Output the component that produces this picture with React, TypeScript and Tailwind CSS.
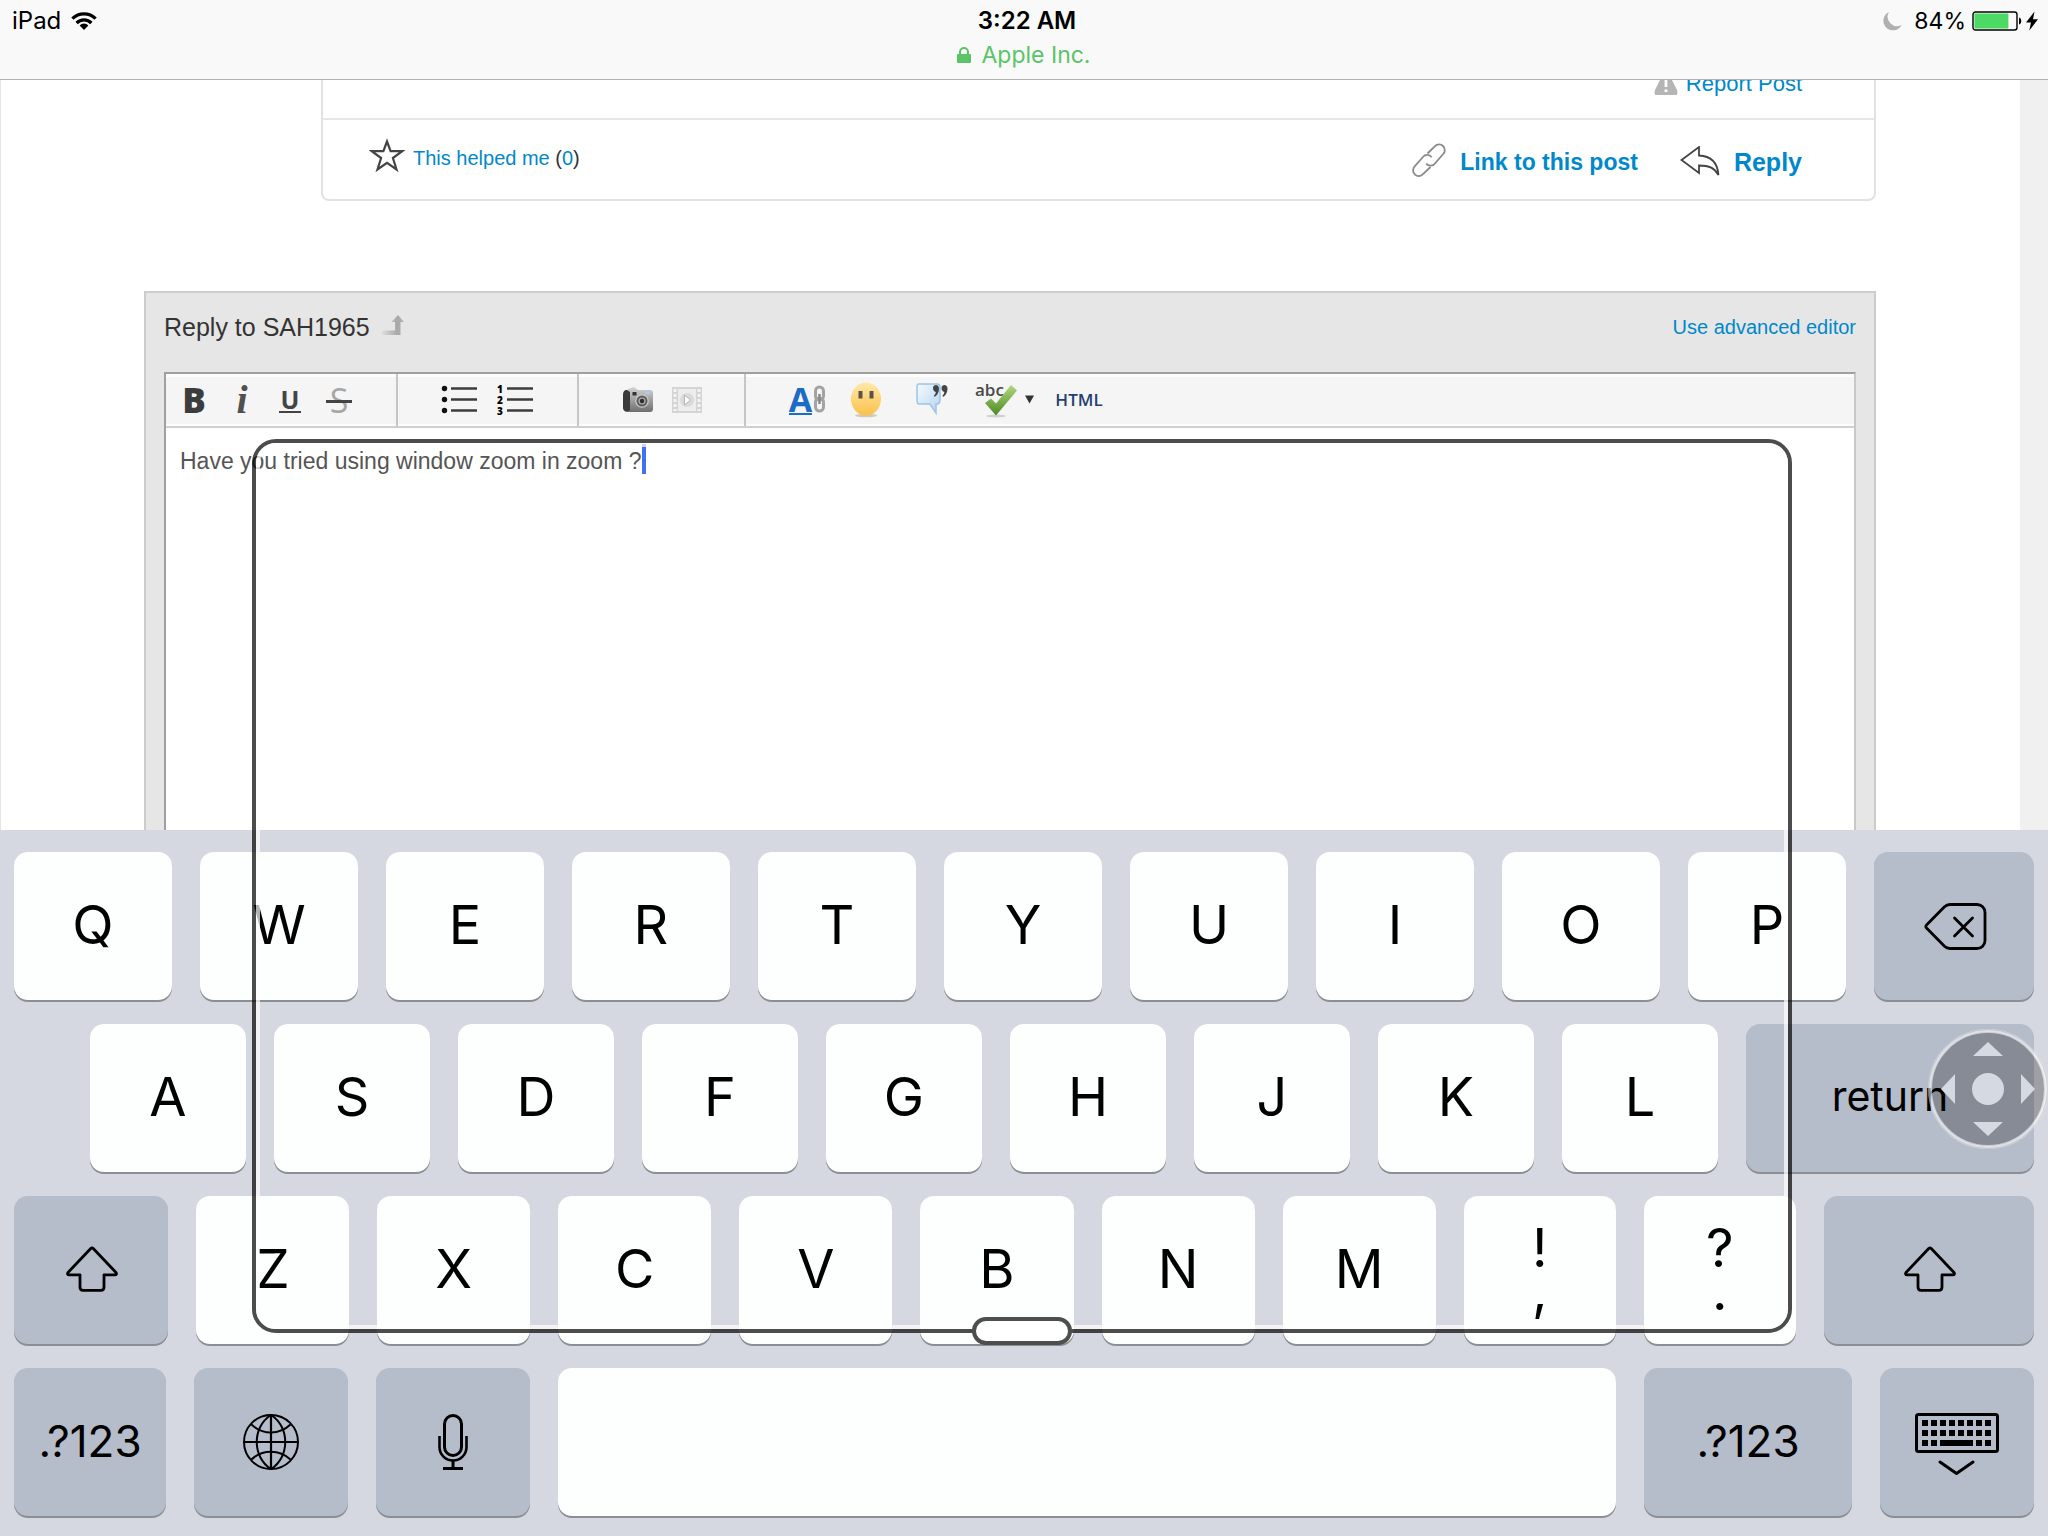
import React from "react";

type KeyDef = {
  id: string;
  label?: React.ReactNode;
  name?: string;
  dark?: boolean;
  grow: string;
  text?: string;
};

/* ---------- status bar icons ---------- */

function WifiIcon() {
  return (
    <svg width="26" height="18" viewBox="0 0 26 18" fill="none" stroke="#000" strokeWidth="3.2">
      <path d="M1.4 6.6a16.4 16.4 0 0 1 23.2 0" />
      <path d="M5.6 11a10.5 10.5 0 0 1 14.8 0" />
      <path d="M13 18l-4.4-4.6a6.2 6.2 0 0 1 8.8 0z" fill="#000" stroke="none" />
    </svg>
  );
}

function LockIcon() {
  return (
    <svg width="14" height="16" viewBox="0 0 14 16">
      <path d="M3 8V5a4 4 0 0 1 8 0v3" fill="none" stroke="#5ac467" strokeWidth="2" />
      <rect x="0" y="7" width="14" height="9" rx="1" fill="#5ac467" />
    </svg>
  );
}

function MoonIcon() {
  return (
    <svg width="19" height="19" viewBox="0 0 19 19">
      <path d="M6 0A9.6 9.6 0 1 0 18.6 13 9.4 9.4 0 0 1 6 0z" fill="#b0b0b0" />
    </svg>
  );
}

function BatteryIcon() {
  return (
    <svg width="50" height="20" viewBox="0 0 50 20">
      <rect x="1" y="1" width="44" height="18" rx="2.5" fill="none" stroke="#000" strokeWidth="1.4" />
      <rect x="2.4" y="2.4" width="34" height="15.2" rx="1" fill="#4cd964" />
      <path d="M47 6.5c3 .8 3 6.2 0 7z" fill="#000" />
    </svg>
  );
}

function BoltIcon() {
  return (
    <svg width="12" height="20" viewBox="0 0 12 20">
      <path d="M8.5.5L0 11.5h5L3.3 19.5 12 8.3H7z" fill="#000" />
    </svg>
  );
}

/* ---------- page icons ---------- */

function WarnIcon() {
  return (
    <svg width="24" height="22" viewBox="0 0 24 22">
      <path d="M12 0c2 0 3 1 4 3l7 14c1 3 .5 5-1.5 5h-19C.5 22 0 20 1 17L8 3c1-2 2-3 4-3z" fill="#b5b5b5" />
      <path d="M10.6 7h2.8v7h-2.8zM10.6 16.5h2.8v2.5h-2.8z" fill="#fff" />
    </svg>
  );
}

function StarIcon() {
  return (
    <svg width="36" height="40" viewBox="0 0 36 40">
      <path
        d="M18 3.5l3.6 9.7h11.6l-9.3 6.8 3.6 11.5L18 24.8 8.5 31.5l3.6-11.5L2.8 13.2h11.6z"
        fill="none"
        stroke="#444"
        strokeWidth="2.2"
      />
    </svg>
  );
}

function ChainIcon() {
  return (
    <svg width="34" height="38" viewBox="0 0 34 38" fill="none" stroke="#8a8a8a" strokeWidth="1.8">
      <path d="M15.5 10.5L23 3.2a5.6 5.6 0 0 1 8.2 7.8l-8 9.2a5.6 5.6 0 0 1-9 .4" />
      <path d="M18.5 24L11 31.2a5.6 5.6 0 0 1-8.5-7.6l8.4-9.600a5.6 5.6 0 0 1 8.8.2" />
    </svg>
  );
}

function ReplyArrowIcon() {
  return (
    <svg width="40" height="32" viewBox="0 0 40 32">
      <path
        d="M19 1v8.5c11 .5 18.500 6 19.500 19.500-4-7-9-9.500-19.500-9.500V27L1.500 14z"
        fill="none"
        stroke="#444"
        strokeWidth="1.8"
      />
    </svg>
  );
}

function UpArrowIcon() {
  return (
    <svg width="22" height="24" viewBox="0 0 22 24">
      <defs>
        <linearGradient id="upArrow" x1="0" x2="1">
          <stop offset="0" stopColor="#dedede" />
          <stop offset="0.7" stopColor="#a8a8a8" />
          <stop offset="1" stopColor="#b4b4b4" />
        </linearGradient>
      </defs>
      <path d="M0 20v-4.5h13V7H9.500L16 0l6 7h-3.500v13z" fill="url(#upArrow)" />
    </svg>
  );
}

/* ---------- toolbar icons ---------- */

function BulletListIcon() {
  return (
    <svg width="36" height="30" viewBox="0 0 36 30" fill="#111">
      <circle cx="3.500" cy="3.500" r="2.700" />
      <circle cx="3.500" cy="14.500" r="2.700" />
      <circle cx="3.500" cy="25.500" r="2.700" />
      <path d="M10 3.500h26M10 14.500h26M10 25.500h26" stroke="#3c3c3c" strokeWidth="2.400" />
    </svg>
  );
}

function NumberListIcon() {
  return (
    <span className="flex items-center gap-1">
      <span className="flex flex-col font-['Open_Sans',sans-serif] text-[10px] leading-[11px] font-extrabold text-black">
        <span>1</span>
        <span>2</span>
        <span>3</span>
      </span>
      <svg width="26" height="30" viewBox="0 0 26 30">
        <path d="M0 3.500h26M0 14.500h26M0 25.500h26" stroke="#3c3c3c" strokeWidth="2.400" />
      </svg>
    </span>
  );
}

function CameraIcon() {
  return (
    <svg width="30" height="26" viewBox="0 0 30 26">
      <defs>
        <linearGradient id="camBody" x1="0" x2="0" y1="0" y2="1">
          <stop offset="0" stopColor="#d4d4d4" />
          <stop offset="1" stopColor="#6f6f6f" />
        </linearGradient>
      </defs>
      <path d="M5 2l6-2 4 3h12c2 0 3 1 3 2.500V22c0 2-1 3-3 3H4c-2 0-3-1-3-3V8z" fill="url(#camBody)" />
      <path d="M0 8c0-3 1-5 4-5l3 2v18c-2 2-7 2-7-2z" fill="#3a3a3a" />
      <path d="M9.500 5h4v3.500h-4z" fill="#333" />
      <path d="M22 5h5v2.500h-5z" fill="#a9cdea" />
      <circle cx="19" cy="14" r="6.800" fill="#c9c9c9" />
      <circle cx="19" cy="14" r="5.500" fill="#5a5a5a" />
      <circle cx="19" cy="14" r="3.600" fill="#a8a8a8" />
      <circle cx="19" cy="14" r="2.200" fill="#2c2c2c" />
    </svg>
  );
}

function VideoIcon() {
  return (
    <svg width="30" height="26" viewBox="0 0 30 26">
      <rect x="0" y="0" width="30" height="26" fill="#d4d4d4" />
      <rect x="6" y="2" width="18" height="22" fill="#ececec" />
      <path d="M3 2v22M27 2v22" stroke="#f4f4f4" strokeWidth="3" strokeDasharray="3 2" />
      <circle cx="15" cy="13" r="7" fill="#dadada" />
      <path d="M12.500 8l6 5-6 5z" fill="#fff" stroke="#b5b5b5" />
    </svg>
  );
}

function LinkTextIcon() {
  return (
    <span className="flex items-center">
      <span className="border-b-2 border-[#1b6cc4] font-['Open_Sans',sans-serif] text-[34px] leading-[28px] font-bold text-[#1b6cc4]">
        A
      </span>
      <svg width="15" height="32" viewBox="0 0 15 32" fill="none" stroke="#a3a3a3" strokeWidth="3">
        <rect x="3.500" y="3" width="8" height="13" rx="4" />
        <rect x="3.500" y="14" width="8" height="13" rx="4" />
        <path d="M7.500 10v10" stroke="#8b8b8b" strokeWidth="2.500" />
      </svg>
    </span>
  );
}

function FaceIcon() {
  return (
    <svg width="32" height="36" viewBox="0 0 32 36">
      <defs>
        <linearGradient id="face" x1="0" x2="0" y1="0" y2="1">
          <stop offset="0" stopColor="#ffe9a8" />
          <stop offset="1" stopColor="#fbc14a" />
        </linearGradient>
      </defs>
      <ellipse cx="16" cy="33.500" rx="11" ry="1.800" fill="#cfcabb" />
      <ellipse cx="16" cy="17" rx="15" ry="16.500" fill="url(#face)" />
      <path d="M10.500 9v7.500M21.500 9v7.500" stroke="#5b5348" strokeWidth="4" />
    </svg>
  );
}

function QuoteIcon() {
  return (
    <svg width="32" height="34" viewBox="0 0 32 34">
      <defs>
        <linearGradient id="bubble" x1="0" x2="1" y1="0" y2="1">
          <stop offset="0" stopColor="#f4faff" />
          <stop offset="1" stopColor="#b4d5f0" />
        </linearGradient>
      </defs>
      <path
        d="M3 1h18c2 0 3 1 3 3v13c0 2-1 4-3 4h-1v9l-6-9H3c-2 0-2-2-2-4V4c0-2 0-3 2-3z"
        fill="url(#bubble)"
        stroke="#9cc4e6"
        strokeWidth="1.500"
      />
      <path
        d="M17 5c0-2 1.500-3 3-3s3 1.300 3 3.500c0 3.800-1.600 7-4.500 8.500l-.5-1.500c1.200-1 1.800-2.200 1.800-3.500C18 8.500 17 7 17 5zM25.500 5c0-2 1.500-3 3-3s3 1.300 3 3.500c0 3.800-1.600 7-4.500 8.500l-.5-1.500c1.200-1 1.800-2.200 1.800-3.500-1.800-.5-2.800-2-2.800-4z"
        fill="#444"
      />
    </svg>
  );
}

function SpellIcon() {
  return (
    <span className="relative flex h-9 w-[60px] items-center">
      <span className="absolute -top-0.5 left-0 font-['Open_Sans',sans-serif] text-[17px] leading-5 font-semibold text-[#4a4a4a]">
        abc
      </span>
      <svg width="60" height="36" viewBox="0 0 60 36" className="relative">
        <defs>
          <linearGradient id="check" x1="0" x2="0" y1="0" y2="1">
            <stop offset="0" stopColor="#b4d77e" />
            <stop offset="1" stopColor="#4c8a22" />
          </linearGradient>
        </defs>
        <ellipse cx="21" cy="34" rx="10" ry="1.500" fill="#d0d0d0" />
        <path d="M10 21l6-4.500 5 5L36 3l6 5.500L21 33.500z" fill="url(#check)" />
        <path d="M50 13.500h9l-4.500 8z" fill="#333" />
      </svg>
    </span>
  );
}

/* ---------- keyboard icons ---------- */

function BackspaceIcon() {
  return (
    <svg width="66" height="47" viewBox="-3 0 66 47" fill="none" stroke="#000" strokeWidth="2.800" strokeLinecap="round">
      <path
        d="M26 1.500h27a8 8 0 0 1 8 8v28a8 8 0 0 1-8 8H26c-2.500 0-4-.8-5.500-2.200L2.500 25a2 2 0 0 1 0-3l18-18.300C22 2.300 23.500 1.500 26 1.500z"
        strokeLinejoin="round"
      />
      <path d="M30.500 15l18 18M48.500 15l-18 18" />
    </svg>
  );
}

function ShiftIcon() {
  return (
    <svg width="54" height="48" viewBox="-2 0 54 48" fill="none" stroke="#000" strokeWidth="2.800" strokeLinejoin="round">
      <path d="M25 2.300L2 26.500c-.9 1.200-.4 2.300 1 2.300h11V41c0 2 1 3.300 3 3.300h18c2 0 3-1.300 3-3.300V28.800h11c1.400 0 1.900-1.100 1-2.300L27 2.300c-.6-.7-1.400-.7-2 0z" />
    </svg>
  );
}

function GlobeIcon() {
  return (
    <svg width="56" height="56" viewBox="0 0 56 56" fill="none" stroke="#000" strokeWidth="2">
      <circle cx="28" cy="28" r="27" />
      <path d="M28 1v54M1 28h54" strokeWidth="2.200" />
      <path d="M28 1C9 13 9 43 28 55M28 1c19 12 19 42 0 54" />
      <path d="M8.500 10.500c11 10.500 28 10.500 39 0M8.500 45.500c11-10.500 28-10.500 39 0" />
    </svg>
  );
}

function MicIcon() {
  return (
    <svg width="30" height="56" viewBox="0 0 30 56" fill="none" stroke="#000" strokeWidth="3">
      <rect x="6.500" y="1.500" width="17" height="40" rx="8.500" />
      <path d="M1.500 22v11a13.500 13.500 0 0 0 27 0V22" strokeWidth="2.600" />
      <path d="M15 46v9M5 54.500h20" />
    </svg>
  );
}

function HideKeyboardIcon() {
  const cols = [0, 1, 2, 3, 4, 5, 6, 7];
  return (
    <svg width="84" height="66" viewBox="0 -4 84 66">
      <rect x="1.500" y="1.500" width="81" height="37" rx="2" fill="none" stroke="#000" strokeWidth="3" />
      {cols.map((c) => (
        <g key={c}>
          <rect x={7 + c * 9} y="7" width="6" height="6" />
          <rect x={7 + c * 9} y="17" width="6" height="6" />
        </g>
      ))}
      <rect x="7" y="27" width="6" height="6" />
      <rect x="16" y="27" width="6" height="6" />
      <rect x="25" y="27" width="33" height="6" />
      <rect x="61" y="27" width="6" height="6" />
      <rect x="70" y="27" width="6" height="6" />
      <path d="M25 49l16.500 11.500L58 49" fill="none" stroke="#000" strokeWidth="3" strokeLinecap="round" />
    </svg>
  );
}

function JoystickIcon() {
  return (
    <svg width="120" height="120" viewBox="0 0 120 120">
      <circle cx="60" cy="60" r="57" fill="#000" fillOpacity="0.260" />
      <circle cx="60" cy="60" r="58" fill="none" stroke="#fff" strokeOpacity="0.550" strokeWidth="4" />
      <circle cx="60" cy="60" r="59.500" fill="none" stroke="#000" strokeOpacity="0.120" />
      <g fill="#d5dae2">
        <circle cx="60" cy="60" r="16" />
        <path d="M60 13l15 14H45zM60 107l15-14H45zM13 60l14-15v30zM107 60L93 45v30z" />
      </g>
    </svg>
  );
}

/* ---------- keyboard ---------- */

const LETTER = "text-[54px] pb-[3px]";
const NUMERIC = "text-[44px] pb-[3px]";

const letters = (s: string, grow: string): KeyDef[] =>
  s.split("").map((l) => ({ id: l, label: l, grow, text: LETTER }));

const stacked = (top: string, bottom: string) => (
  <span className="flex flex-col leading-[43px]">
    <span>{top}</span>
    <span>{bottom}</span>
  </span>
);

const rows: { id: string; inset: string; keys: KeyDef[] }[] = [
  {
    id: "top",
    inset: "pl-3.5",
    keys: [
      ...letters("QWERTYUIOP", "grow-[158]"),
      { id: "backspace", name: "Delete", label: <BackspaceIcon />, dark: true, grow: "grow-[160]" },
    ],
  },
  {
    id: "home",
    inset: "pl-[90px]",
    keys: [
      ...letters("ASDFGHJKL", "grow-[156]"),
      { id: "return", label: "return", dark: true, text: "text-[41px] pb-[3px]", grow: "grow-[288]" },
    ],
  },
  {
    id: "bottom",
    inset: "pl-3.5",
    keys: [
      { id: "shiftL", name: "Left shift", label: <ShiftIcon />, dark: true, grow: "grow-[154]" },
      ...letters("ZXCVBNM", "grow-[153]"),
      { id: "comma", label: stacked("!", ","), text: LETTER, grow: "grow-[152]" },
      { id: "period", label: stacked("?", "."), text: LETTER, grow: "grow-[152]" },
      { id: "shiftR", name: "Right shift", label: <ShiftIcon />, dark: true, grow: "grow-[210]" },
    ],
  },
  {
    id: "space",
    inset: "pl-3.5",
    keys: [
      { id: "numL", label: ".?123", dark: true, text: NUMERIC, grow: "grow-[152]" },
      { id: "globe", name: "Next keyboard", label: <GlobeIcon />, dark: true, grow: "grow-[154]" },
      { id: "mic", name: "Dictate", label: <MicIcon />, dark: true, grow: "grow-[154]" },
      { id: "spacebar", name: "Space", grow: "grow-[1058]" },
      { id: "numR", label: ".?123", dark: true, text: NUMERIC, grow: "grow-[208]" },
      { id: "hide", name: "Hide keyboard", label: <HideKeyboardIcon />, dark: true, grow: "grow-[154]" },
    ],
  },
];

function Key({ k }: { k: KeyDef }) {
  return (
    <button
      type="button"
      aria-label={k.name}
      className={`flex h-[148px] min-w-0 shrink basis-0 items-center justify-center rounded-[14px] text-black shadow-[0_2px_0_#8b8e93] ${k.grow} ${
        k.dark ? "bg-[#b5bcca]" : "bg-[#fdfefe]"
      } ${k.text ?? ""}`}
    >
      {k.label}
    </button>
  );
}

function Keyboard() {
  return (
    <section
      aria-label="Keyboard"
      className="flex shrink-0 flex-col gap-6 bg-[#d5d8e0] pt-[22px] pb-5 font-['Inter',sans-serif]"
    >
      {rows.map((row) => (
        <div key={row.id} className={`flex gap-7 pr-3.5 ${row.inset}`}>
          {row.keys.map((k) => (
            <Key key={k.id} k={k} />
          ))}
        </div>
      ))}
    </section>
  );
}

/* ---------- editor ---------- */

function Tool({ name, width, children }: { name: string; width: string; children: React.ReactNode }) {
  return (
    <button type="button" aria-label={name} className={`flex h-full items-center justify-center ${width}`}>
      {children}
    </button>
  );
}

function Toolbar() {
  return (
    <div
      role="toolbar"
      aria-label="Formatting"
      className="flex h-[54px] shrink-0 overflow-hidden border-b-2 border-[#d0d0d0] bg-[#f5f5f5] shadow-[inset_0_3px_0_#fdfdfd,inset_0_-2px_0_#fdfdfd]"
    >
      <div className="flex w-[232px] shrink-0 border-r-2 border-[#c6c6c6] pl-1">
        <Tool name="Bold" width="w-12">
          <span className="font-['Open_Sans',sans-serif] text-[35px] leading-[34px] font-extrabold text-[#3c3c3c]">B</span>
        </Tool>
        <Tool name="Italic" width="w-12">
          <span className="font-['Liberation_Serif',serif] text-[40px] leading-[34px] font-bold text-[#505050] italic">i</span>
        </Tool>
        <Tool name="Underline" width="w-12">
          <span className="border-b-2 border-[#444] px-0.5 font-['Open_Sans',sans-serif] text-[25px] leading-[24px] font-bold text-[#444]">
            U
          </span>
        </Tool>
        <Tool name="Strikethrough" width="w-[50px]">
          <span className="relative font-['Open_Sans',sans-serif] text-[34px] leading-[34px] text-[#a6a6a6]">
            S
            <span className="absolute top-1/2 -right-1 -left-1 h-[3px] bg-[#444]" />
          </span>
        </Tool>
      </div>
      <div className="flex w-[181px] shrink-0 border-r-2 border-[#c6c6c6] pl-[33px]">
        <Tool name="Bulleted list" width="w-14">
          <BulletListIcon />
        </Tool>
        <Tool name="Numbered list" width="w-14">
          <NumberListIcon />
        </Tool>
      </div>
      <div className="flex w-[167px] shrink-0 border-r-2 border-[#c6c6c6] pl-[35px]">
        <Tool name="Insert image" width="w-12">
          <CameraIcon />
        </Tool>
        <Tool name="Insert video" width="w-[50px]">
          <VideoIcon />
        </Tool>
      </div>
      <div className="flex grow pl-[34px]">
        <Tool name="Insert link" width="w-14">
          <LinkTextIcon />
        </Tool>
        <Tool name="Emoticon" width="w-[60px]">
          <FaceIcon />
        </Tool>
        <Tool name="Quote" width="w-[72px]">
          <QuoteIcon />
        </Tool>
        <Tool name="Check spelling" width="w-[74px]">
          <SpellIcon />
        </Tool>
        <Tool name="Edit HTML" width="w-[74px]">
          <span className="font-['Open_Sans',sans-serif] text-[17px] leading-6 font-semibold text-[#1f426f]">HTML</span>
        </Tool>
      </div>
    </div>
  );
}

export default function App() {
  return (
    <div className="relative flex min-h-screen flex-col overflow-hidden bg-[#f0f0f0] font-['Liberation_Sans',Arial,sans-serif]">
      <header className="z-10 grid h-20 shrink-0 grid-cols-3 items-start border-b border-[#b2b2b2] bg-[#f9f9f9] pt-1.5 pr-2.5 pl-3 font-['Inter',sans-serif] text-[24px] leading-[30px] text-black">
        <div className="flex items-center gap-2.5">
          <span>iPad</span>
          <WifiIcon />
        </div>
        <div className="flex flex-col items-center gap-1 pl-1">
          <span className="font-semibold">3:22 AM</span>
          <span className="flex items-center gap-2.5 pr-1.5 text-[23px] text-[#5ac467]">
            <LockIcon />
            Apple Inc.
          </span>
        </div>
        <div className="flex items-center justify-end">
          <MoonIcon />
          <span className="pr-1.5 pl-3 text-[23px]">84%</span>
          <BatteryIcon />
          <span className="pl-1">
            <BoltIcon />
          </span>
        </div>
      </header>

      <main className="mr-7 flex min-h-0 grow flex-col overflow-hidden border-l border-[#e4e4e4] bg-white pr-36 pl-[143px]">
        <article className="ml-[177px] flex shrink-0 flex-col rounded-b-lg border-2 border-t-0 border-[#e2e2e2]">
          <div className="flex h-10 justify-end border-b-2 border-[#e6e6e6] pr-[72px]">
            <a href="#report" className="-mt-2 flex h-6 items-center gap-2 text-[22px] leading-6 text-[#0088cc]">
              <WarnIcon />
              Report Post
            </a>
          </div>
          <div className="flex h-[79px] items-center justify-between pr-[72px] pl-[46px]">
            <div className="flex items-center gap-2 pb-1 text-[20px] leading-6 text-[#333]">
              <StarIcon />
              <span>
                <a href="#helped" className="text-[#0088cc]">
                  This helped me
                </a>{" "}
                (
                <a href="#count" className="text-[#0088cc]">
                  0
                </a>
                )
              </span>
            </div>
            <div className="flex items-center gap-[42px] pt-1 font-bold text-[#0088cc]">
              <a href="#link" className="flex items-center gap-3.5 text-[23px] leading-7">
                <ChainIcon />
                Link to this post
              </a>
              <a href="#reply" className="flex items-center gap-3.5 text-[25px] leading-7">
                <ReplyArrowIcon />
                Reply
              </a>
            </div>
          </div>
        </article>

        <form className="mt-[90px] flex grow flex-col border-2 border-b-0 border-[#cbcccb] bg-[#e6e6e6] px-[18px]">
          <div className="mb-3 flex h-[67px] shrink-0 items-center justify-between">
            <h2 className="flex items-center gap-3 text-[25px] leading-8 text-[#333]">
              <label htmlFor="reply-body">Reply to SAH1965</label>
              <UpArrowIcon />
            </h2>
            <a href="#advanced" className="text-[20px] leading-6 text-[#0088cc]">
              Use advanced editor
            </a>
          </div>
          <div className="relative flex grow flex-col border-t-2 border-r-2 border-l-2 border-t-[#a0a0a0] border-r-[#c8c8c8] border-l-[#a0a0a0] bg-white">
            <Toolbar />
            <textarea
              id="reply-body"
              readOnly
              defaultValue="Have you tried using window zoom in zoom ?"
              className="w-full grow resize-none bg-white px-3.5 py-[19px] text-[23px] leading-7 text-[#555] outline-none"
            />
            <span className="absolute top-[70px] left-[476px] h-[30px] w-1 bg-[#4470f0]" />
          </div>
        </form>
      </main>

      <Keyboard />

      {/* floating zoom lens */}
      <div className="pointer-events-none absolute top-[439px] right-64 bottom-[203px] left-[252px] z-20 rounded-[24px] border-4 border-black/70">
        <div className="h-full rounded-[20px] border-4 border-white/70" />
        <div className="absolute -bottom-4 left-1/2 h-7 w-[100px] -translate-x-1/2 rounded-full border-4 border-[#4d4e4e] bg-white" />
      </div>

      {/* zoom controller */}
      <button type="button" aria-label="Zoom controller" className="absolute right-0 bottom-[387px] z-30">
        <JoystickIcon />
      </button>
    </div>
  );
}
